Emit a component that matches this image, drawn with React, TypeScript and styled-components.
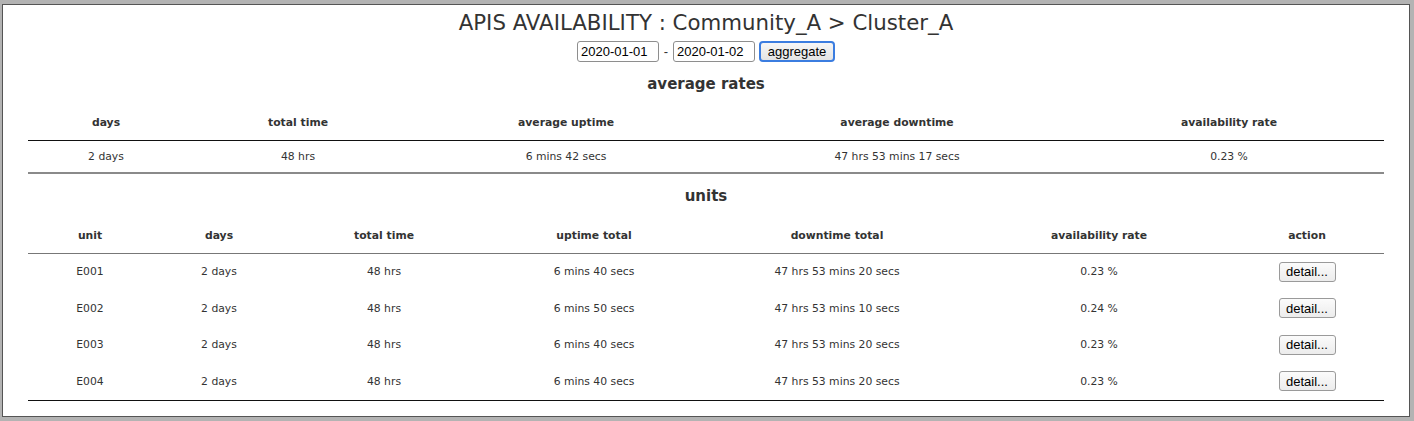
import React from 'react'
import styled, { createGlobalStyle } from 'styled-components'

const GlobalStyle = createGlobalStyle`
  html, body {
    margin: 0;
    padding: 0;
    background: #b3b3b3;
  }
  body {
    font-family: "DejaVu Sans", Verdana, sans-serif;
    color: #333;
  }
`

type Summary = {
  days: string
  total: string
  uptime: string
  downtime: string
  rate: string
}

type Unit = Summary & { unit: string }

const average: Summary = {
  days: '2 days',
  total: '48 hrs',
  uptime: '6 mins 42 secs',
  downtime: '47 hrs 53 mins 17 secs',
  rate: '0.23 %',
}

const units: Unit[] = [
  { unit: 'E001', days: '2 days', total: '48 hrs', uptime: '6 mins 40 secs', downtime: '47 hrs 53 mins 20 secs', rate: '0.23 %' },
  { unit: 'E002', days: '2 days', total: '48 hrs', uptime: '6 mins 50 secs', downtime: '47 hrs 53 mins 10 secs', rate: '0.24 %' },
  { unit: 'E003', days: '2 days', total: '48 hrs', uptime: '6 mins 40 secs', downtime: '47 hrs 53 mins 20 secs', rate: '0.23 %' },
  { unit: 'E004', days: '2 days', total: '48 hrs', uptime: '6 mins 40 secs', downtime: '47 hrs 53 mins 20 secs', rate: '0.23 %' },
]

const averageCols = [156, 228, 308, 354, 310]
const unitCols = [124, 134, 196, 224, 262, 262, 154]

const App: React.FC = () => {
  return (
    <>
      <GlobalStyle />
      <Frame>
        <Title>APIS AVAILABILITY : Community_A &gt; Cluster_A</Title>
        <Controls>
          <DateInput defaultValue="2020-01-01" />
          <Dash>-</Dash>
          <DateInput defaultValue="2020-01-02" />
          <AggregateButton>aggregate</AggregateButton>
        </Controls>

        <SectionTitle>average rates</SectionTitle>
        <Table $gap={11}>
          <colgroup>
            {averageCols.map((w, i) => (
              <col key={i} width={w} />
            ))}
          </colgroup>
          <thead>
            <HeadRow height={35}>
              <Th>days</Th>
              <Th>total time</Th>
              <Th>average uptime</Th>
              <Th>average downtime</Th>
              <Th>availability rate</Th>
            </HeadRow>
          </thead>
          <Body bottom="2px solid #8a8a8a">
            <Row height={33}>
              <Td>{average.days}</Td>
              <Td>{average.total}</Td>
              <Td>{average.uptime}</Td>
              <Td>{average.downtime}</Td>
              <Td>{average.rate}</Td>
            </Row>
          </Body>
        </Table>

        <SectionTitle $gap={12}>units</SectionTitle>
        <Table $gap={13}>
          <colgroup>
            {unitCols.map((w, i) => (
              <col key={i} width={w} />
            ))}
          </colgroup>
          <thead>
            <HeadRow height={34} $line="#777">
              <Th>unit</Th>
              <Th>days</Th>
              <Th>total time</Th>
              <Th>uptime total</Th>
              <Th>downtime total</Th>
              <Th>availability rate</Th>
              <Th>action</Th>
            </HeadRow>
          </thead>
          <Body bottom="1px solid #111">
            {units.map(u => (
              <Row key={u.unit} height={36.75}>
                <Td>{u.unit}</Td>
                <Td>{u.days}</Td>
                <Td>{u.total}</Td>
                <Td>{u.uptime}</Td>
                <Td>{u.downtime}</Td>
                <Td>{u.rate}</Td>
                <Td>
                  <DetailButton>detail...</DetailButton>
                </Td>
              </Row>
            ))}
          </Body>
        </Table>
      </Frame>
    </>
  )
}

const Frame = styled.div`
  box-sizing: border-box;
  margin: 4px 4px 0 2px;
  height: 413px;
  background: #fff;
  border: 1px solid #555;
  padding-top: 5px;
`

const Title = styled.h1`
  margin: 0;
  text-align: center;
  font-size: 21.3px;
  font-weight: normal;
  line-height: 26px;
  color: #333;
`

const Controls = styled.div`
  display: flex;
  justify-content: center;
  align-items: center;
  margin-top: 5px;
  height: 21px;
  font-family: "Liberation Sans", Arial, sans-serif;
  font-size: 13px;
`

const DateInput = styled.input`
  box-sizing: border-box;
  width: 82px;
  height: 21px;
  padding: 0 3px;
  border: 1px solid #8e8e8e;
  border-radius: 3px;
  font-family: "Liberation Sans", Arial, sans-serif;
  font-size: 13px;
  color: #000;
  background: #fff;
`

const Dash = styled.span`
  width: 14px;
  text-align: center;
  color: #333;
`

const AggregateButton = styled.button`
  box-sizing: border-box;
  margin-left: 4px;
  width: 76px;
  height: 21px;
  padding: 0;
  border: 2px solid #3b7de0;
  border-radius: 4px;
  background: linear-gradient(#f6f6f6, #e4e4e4);
  font-family: "Liberation Sans", Arial, sans-serif;
  font-size: 13px;
  color: #000;
`

const SectionTitle = styled.h2<{ $gap?: number }>`
  margin: ${p => p.$gap ?? 12}px 0 0;
  text-align: center;
  font-size: 15px;
  line-height: 20px;
  font-weight: bold;
  color: #333;
`

const Table = styled.table<{ $gap?: number }>`
  width: 1356px;
  margin: ${p => p.$gap ?? 10}px auto 0;
  border-collapse: collapse;
  table-layout: fixed;
  font-size: 10.8px;
  color: #333;
`

const HeadRow = styled.tr<{ height: number; $line?: string }>`
  height: ${p => p.height}px;
  border-bottom: 1px solid ${p => p.$line ?? '#111'};
`

const Th = styled.th`
  padding: 0;
  font-weight: bold;
  text-align: center;
  vertical-align: middle;
`

const Body = styled.tbody<{ bottom: string }>`
  border-bottom: ${p => p.bottom};
`

const Row = styled.tr<{ height: number }>`
  height: ${p => p.height}px;
`

const Td = styled.td`
  padding: 0;
  text-align: center;
  vertical-align: middle;
`

const DetailButton = styled.button`
  box-sizing: border-box;
  width: 57px;
  height: 20px;
  padding: 0;
  border: 1px solid #9a9a9a;
  border-radius: 3px;
  background: linear-gradient(#fbfbfb, #ececec);
  font-family: "Liberation Sans", Arial, sans-serif;
  font-size: 13px;
  color: #000;
`

export default App
